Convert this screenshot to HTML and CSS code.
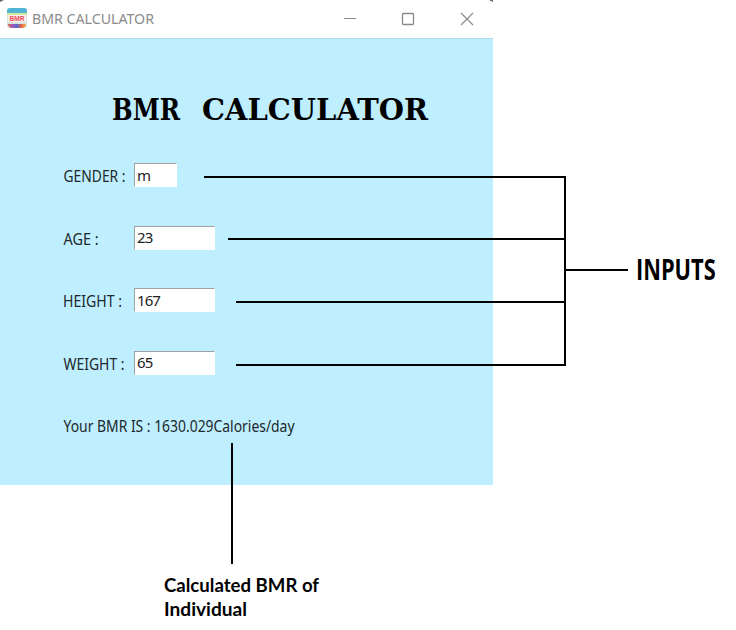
FILE: index.html
```html
<!DOCTYPE html>
<html lang="en">
<head>
<meta charset="utf-8">
<title>BMR CALCULATOR</title>
<link rel="stylesheet" href="styles.css">
</head>
<body>
<main class="figure">
  <section class="window">
    <header class="titlebar">
      <svg class="app-icon" width="20" height="20" viewBox="0 0 20 20">
        <defs><linearGradient id="rainbow"><stop offset="0" stop-color="#df6b48"/><stop offset=".25" stop-color="#a455bd"/><stop offset=".5" stop-color="#5669cc"/><stop offset=".75" stop-color="#ed6547"/><stop offset="1" stop-color="#f3b44d"/></linearGradient></defs>
        <rect width="20" height="20" rx="3" fill="#d5e3dd"/>
        <path d="M0 5V3Q0 0 3 0H17Q20 0 20 3V5Z" fill="#51b5d5"/>
        <path d="M0 5H20V7H0Z" fill="#d5e99c"/>
        <rect x="1" y="7" width="18" height="7" rx="1" fill="#fff0f0"/>
        <text x="2.5" y="13.3" textLength="15" lengthAdjust="spacingAndGlyphs" class="icon-text">BMR</text>
        <path d="M1 16H19V17Q18 20 15 20H5Q2 20 1 17Z" fill="url(#rainbow)"/>
      </svg>
      <svg class="caption" width="130" height="24"><text x="0" y="16.5" textLength="122" lengthAdjust="spacingAndGlyphs">BMR CALCULATOR</text></svg>
      <svg class="controls" width="130" height="14" viewBox="0 0 130 14" fill="none" stroke="#8b8b8b">
        <path d="M0 6.5H12"/><rect x="58.5" y="1.5" width="11" height="11" rx="1" stroke-width="1.3"/><path d="M117 1L129 13M129 1L117 13" stroke-width="1.2"/>
      </svg>
    </header>
    <div class="client">
      <svg class="heading" width="330" height="36"><g class="heading-text"><text x="1" y="27.5" textLength="68" lengthAdjust="spacingAndGlyphs">BMR</text><text x="91" y="27.5" textLength="226" lengthAdjust="spacingAndGlyphs">CALCULATOR</text></g></svg>
      <form class="form">
        <div class="row"><svg class="label" width="71" height="24"><text x="0.5" y="18.5" textLength="62" lengthAdjust="spacingAndGlyphs">GENDER :</text></svg><input class="field short" value="m" aria-label="Gender"></div>
        <div class="row"><svg class="label" width="71" height="24"><text x="0.5" y="18.5" textLength="35" lengthAdjust="spacingAndGlyphs">AGE :</text></svg><input class="field" value="23" aria-label="Age"></div>
        <div class="row"><svg class="label" width="71" height="24"><text x="0" y="18.5" textLength="59" lengthAdjust="spacingAndGlyphs">HEIGHT :</text></svg><input class="field" value="167" aria-label="Height"></div>
        <div class="row"><svg class="label" width="71" height="24"><text x="0.5" y="18.5" textLength="61" lengthAdjust="spacingAndGlyphs">WEIGHT :</text></svg><input class="field" value="65" aria-label="Weight"></div>
        <svg class="result" width="250" height="26"><text x="0.5" y="18.5" textLength="231" lengthAdjust="spacingAndGlyphs">Your BMR IS : 1630.029Calories/day</text></svg>
      </form>
    </div>
  </section>
  <svg class="annotations" width="736" height="630" viewBox="0 0 736 630">
    <path class="connector" d="M204 177H565V365H236M228 239H565M236 302H565M565 270H628M232 443V564"/>
    <path d="M0 0H4L0 2ZM489 0H493V2Z" fill="#666"/>
    <text class="inputs" transform="translate(636 280) scale(.765 1)">INPUTS</text>
    <text class="note" x="164" y="592" textLength="155" lengthAdjust="spacingAndGlyphs">Calculated BMR of</text>
    <text class="note" x="164" y="616" textLength="83" lengthAdjust="spacingAndGlyphs">Individual</text>
  </svg>
</main>
</body>
</html>
```
FILE: styles.css
```css
* { box-sizing: border-box; }
body { margin: 0; background: #fff; font-family: "Noto Sans", "Open Sans", sans-serif; }
.figure { position: relative; width: 736px; height: 630px; }
.window { width: 493px; height: 485px; }
svg { display: block; flex: none; overflow: visible; }
.titlebar { height: 38px; display: flex; align-items: center; padding-left: 7px; background: #fff; }
.app-icon { margin-top: -2px; }
.icon-text { font: bold 7px "Liberation Sans", sans-serif; fill: #ef4c55; }
.caption { margin-left: 5px; font-size: 15px; fill: #8b8b8b; }
.controls { margin-left: 182px; }
.client { height: 447px; padding: 53px 0 0 63px; background: #bfeeff; border-top: 1px solid #a9dae9; }
.heading { margin-left: 48px; }
.heading-text { font: bold 30.5px "DejaVu Serif", serif; fill: #000; }
.form { padding-top: 35px; }
.row { display: flex; height: 24px; margin-bottom: 38.5px; }
.label, .result { font-size: 15.7px; fill: #20282b; }
.field { width: 81px; height: 24px; padding: 0 1px 1px 2px; border: 1px solid #fff; border-top-color: #a0a0a0; border-left-color: #a0a0a0; border-radius: 0; background: #fff; color: #222; font: 15px "Noto Sans", sans-serif; letter-spacing: -.9px; outline: 0; }
.short { width: 43px; }
.annotations { position: absolute; inset: 0; pointer-events: none; }
.connector { fill: none; stroke: #000; stroke-width: 2; }
.inputs { font: bold 28.5px "Open Sans", sans-serif; }
.note { font: bold 18px "Lato", sans-serif; }
```
